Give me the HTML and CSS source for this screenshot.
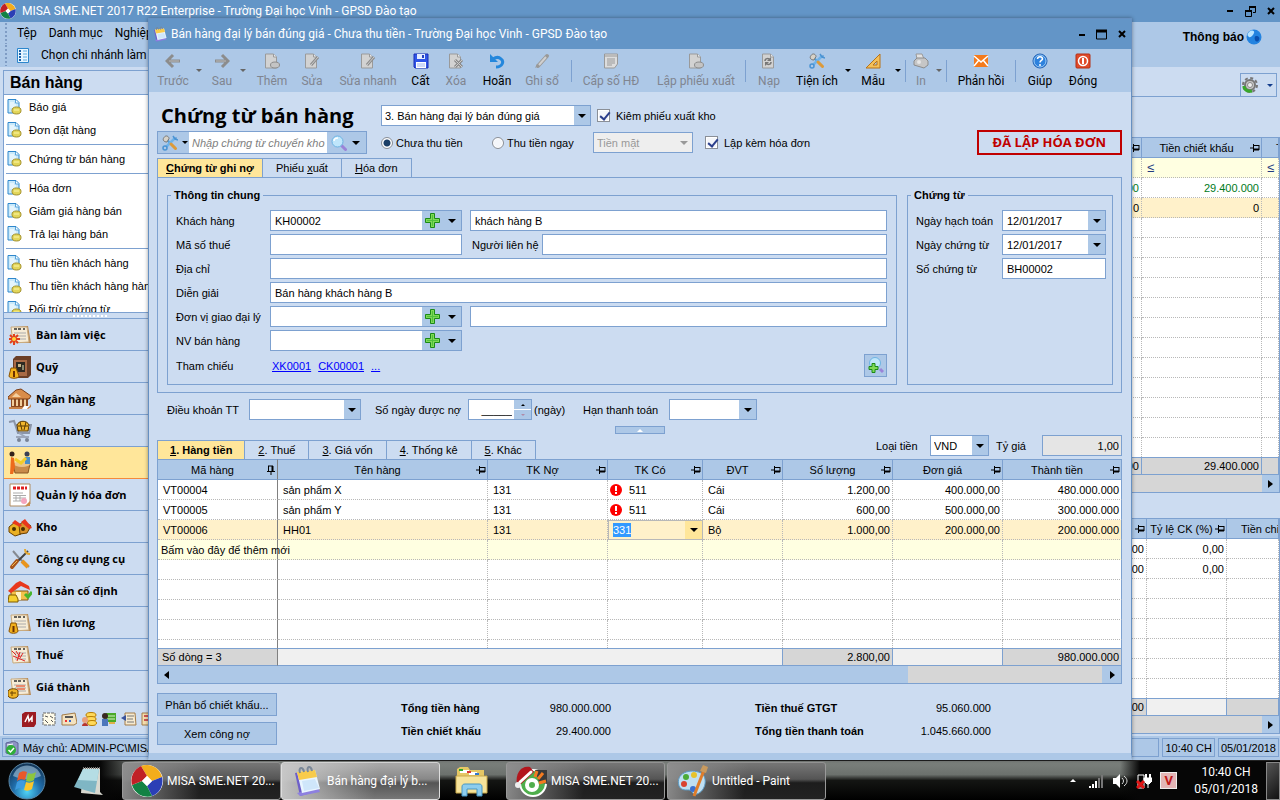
FILE: index.html
```html
<!DOCTYPE html>
<html lang="vi">
<head>
    <meta charset="UTF-8">
    <meta name="viewport" content="width=device-width, initial-scale=1.0">
    <title>MISA SME.NET 2017 - Chứng từ bán hàng</title>
    <link rel="stylesheet" href="styles.css">
</head>
<body>
    <!-- Shared icons -->
    <svg class="defs" aria-hidden="true">
        <symbol id="logo" viewBox="0 0 32 32">
            <circle cx="16" cy="16" r="16" fill="#fff"/>
            <path d="M10 1A16 16 0 0 1 31 12L21 16 16 11z" fill="#f3ad1c"/>
            <path d="M31 12A16 16 0 0 1 21 31L16 21 21 16z" fill="#2b3fb5"/>
            <path d="M21 31A16 16 0 0 1 1 20L11 16 16 21z" fill="#128244"/>
            <path d="M1 20A16 16 0 0 1 10 1L16 11 11 16z" fill="#c02026"/>
            <path d="M16 11l5 5-5 5-5-5z" fill="#fff"/>
        </symbol>
        <symbol id="doc" viewBox="0 0 15 16">
            <path d="M1 .5h8l3 3V14H1z" fill="#c9e9fa" stroke="#2f87cc"/>
            <path d="M8.500 1v3H12" fill="#fff" stroke="#5ba5dc"/>
            <path d="M3 4h4M3 6h6M3 8h5" stroke="#fff"/>
            <ellipse cx="9.500" cy="11.500" rx="4.500" ry="3.500" fill="#e2d65a" stroke="#a4902a"/>
            <path d="M7 11h5" stroke="#fdf6a8"/>
        </symbol>
        <symbol id="pad" viewBox="0 0 32 32">
            <path d="M4 8l18-3 2 22-15 4z" fill="#6d5fc9"/>
            <path d="M6 28l3 3 20-4-2-4z" fill="#8d80e0"/>
            <path d="M6 7l18-2 5 19-18 4z" fill="#e9f5ff"/>
            <path d="M6 7l18-2 2 7-18 3z" fill="#f8cb4b"/>
            <path d="M11 16l13-2 4 9-15 3z" fill="#cfe6fa"/>
            <path d="M9 8c-2-6 3-7 4-1M17 7c-2-6 3-7 4-1" fill="none" stroke="#7a8797" stroke-width="2"/>
        </symbol>
        <symbol id="pin" viewBox="0 0 10 8">
            <path d="M0 4h3M3.500 0v8M4 1.500h5M4 5.500h5M9 1v5" fill="none" stroke="#000"/>
            <path d="M4 5.500h5" stroke="#000" stroke-width="2"/>
        </symbol>
        <symbol id="plus" viewBox="0 0 15 15">
            <path d="M5.500 .5h4v5h5v4h-5v5h-4v-5h-5v-4h5z" fill="#7fd957" stroke="#1b8a17"/>
            <path d="M7.500 2v11M2 7.500h11" stroke="#4fc03c"/>
        </symbol>
        <symbol id="tools" viewBox="0 0 16 16">
            <path d="M5 5l8 8" stroke="#4d9fdd" stroke-width="2" stroke-linecap="round"/>
            <path d="M2 2.500c2-3 5-1 5 1L5 7C2 7 0 5 2 2.500z" fill="#d7d2c8" stroke="#777"/>
            <path d="M13 3L4 12" stroke="#6fb3ea" stroke-width="2.500"/>
            <path d="M14.500 2.500l-2 2M11 1l2 3 3 1" stroke="#4a93d3" fill="none" stroke-width="1.500"/>
            <circle cx="3" cy="13" r="2" fill="none" stroke="#4a93d3" stroke-width="1.500"/>
            <path d="M9 9l4.500 4.500" stroke="#dd9a3a" stroke-width="3" stroke-linecap="round"/>
        </symbol>
        <symbol id="lens" viewBox="0 0 16 16">
            <path d="M10 10l4.500 4.500" stroke="#9a84d8" stroke-width="3" stroke-linecap="round"/>
            <circle cx="6.500" cy="6.500" r="5.500" fill="#bfe6fb" stroke="#6db3e2"/>
            <path d="M3 6c0-2 2-3 4-3" stroke="#fff" fill="none" stroke-width="1.500"/>
        </symbol>
        <symbol id="gdoc" viewBox="0 0 16 16">
            <path d="M1.500 1h8l3 3v11h-11z" fill="#d2d2d2" stroke="#9a9a9a"/>
            <path d="M9.500 1v3h3" fill="#eee" stroke="#9a9a9a"/>
        </symbol>
        <symbol id="paper" viewBox="0 0 24 24">
            <path d="M5 4l15-1 3 17H7z" fill="#b98a56"/>
            <path d="M3 4h16l2 15-16 1z" fill="#f7ecd6" stroke="#c9ab7e"/>
            <path d="M6 6h3M10 6h3M15 6h2" stroke="#333" stroke-width="1.500"/>
            <path d="M6 10h12M7 13h11M7 16h11" stroke="#aaa"/>
        </symbol>
    </svg>

    <div class="desktop">
        <!-- Main application -->
        <div class="app">
            <div class="app-title">
                <svg width="16" height="16"><use href="#logo"/></svg>
                <span>MISA SME.NET 2017 R22 Enterprise - Trường Đại học Vinh - GPSD Đào tạo</span>
                <div class="win-buttons">
                    <button type="button" aria-label="Thu nhỏ"><svg width="10" height="10"><path d="M1 5h6" stroke="#000" stroke-width="2"/></svg></button>
                    <button type="button" aria-label="Khôi phục"><svg width="12" height="11"><path d="M4 1h7M1 5h6" stroke="#000" stroke-width="2"/><path d="M4.500 1v3M10.500 1v5.500H8M.5 4v6.500h6V4" fill="none" stroke="#000"/></svg></button>
                    <button type="button" aria-label="Đóng"><svg width="10" height="10"><path d="M2 2l6 6M8 2l-6 6" stroke="#000" stroke-width="2"/></svg></button>
                </div>
            </div>
            <div class="app-menu">
                <div>
                    <nav class="menu-row grip">
                        <a href="#">Tệp</a>
                        <a href="#">Danh mục</a>
                        <a href="#">Nghiệp vụ</a>
                    </nav>
                    <div class="menu-row grip">
                        <svg width="12" height="15"><path d="M.5 .5h11v14H.5z" fill="#e6f5ff" stroke="#2c86cc"/><path d="M2 3h2M2 6h2M2 9h2M2 12h2" stroke="#1b62a8" stroke-width="2"/><path d="M6 3h4M6 6h4M6 9h4M6 12h4" stroke="#5aa9e0"/></svg>
                        <a href="#">Chọn chi nhánh làm việc</a>
                    </div>
                </div>
                <a href="#" class="notice">Thông báo
                    <svg width="16" height="16"><circle cx="8" cy="8" r="7.500" fill="#2383e0"/><path d="M3 3c3-3 6-1 5 1S5 9 3 8s-2-3 0-5z" fill="#b9e4ff"/><path d="M10 7c3 0 4 2 3 4s-3 2-4 0 0-4 1-4z" fill="#0a4fae"/></svg>
                </a>
            </div>

            <div class="app-body">
                <aside class="sidebar">
                    <h2>Bán hàng</h2>
                    <ul class="tasks">
                        <li><svg width="15" height="16"><use href="#doc"/></svg><a href="#">Báo giá</a></li>
                        <li><svg width="15" height="16"><use href="#doc"/></svg><a href="#">Đơn đặt hàng</a></li>
                        <li class="sep"></li>
                        <li><svg width="15" height="16"><use href="#doc"/></svg><a href="#">Chứng từ bán hàng</a></li>
                        <li class="sep"></li>
                        <li><svg width="15" height="16"><use href="#doc"/></svg><a href="#">Hóa đơn</a></li>
                        <li><svg width="15" height="16"><use href="#doc"/></svg><a href="#">Giảm giá hàng bán</a></li>
                        <li><svg width="15" height="16"><use href="#doc"/></svg><a href="#">Trả lại hàng bán</a></li>
                        <li class="sep"></li>
                        <li><svg width="15" height="16"><use href="#doc"/></svg><a href="#">Thu tiền khách hàng</a></li>
                        <li><svg width="15" height="16"><use href="#doc"/></svg><a href="#">Thu tiền khách hàng hàng loạt</a></li>
                        <li><svg width="15" height="16"><use href="#doc"/></svg><a href="#">Đối trừ chứng từ</a></li>
                    </ul>
                    <div class="splitter"></div>
                    <nav class="modules">
                        <a href="#"><svg width="24" height="24"><use href="#paper"/><path d="M6 11v11M1 16h11M2 12l8 8M10 12l-8 8" stroke="#e2401c" stroke-width="2"/><circle cx="6" cy="16" r="2" fill="#ffd23c"/></svg>Bàn làm việc</a>
                        <a href="#"><svg width="24" height="24"><path d="M5 4l3-3h15v19l-3 3H5z" fill="#6b3f27"/><path d="M6 5h13v16H6z" fill="#a96a45"/><path d="M8 7h9v10H8z" fill="#2e2a22"/><path d="M10 9h3v3h-3z" fill="#cbb887"/><path d="M14 10h2v5h-2z" fill="#8a8a70"/><path d="M3 13h5l3 8c0 3-10 3-10 0z" fill="#f2b01c" stroke="#8a5200"/><path d="M6 16v6" stroke="#6b3000" stroke-width="2"/></svg>Quỹ</a>
                        <a href="#"><svg width="24" height="24"><path d="M3 11h17v9H3z" fill="#8c4a20"/><path d="M5 11v8M9 11v8M13 11v8M17 11v8" stroke="#f1cf9d" stroke-width="2"/><path d="M0 10l8-7 5-1 10 7-2 3H0z" fill="#d98c4a" stroke="#7b3d16"/><path d="M4 10l4-4 5 4z" fill="#f4cfa0"/><path d="M1 20h20l2-3v3l-3 2H1z" fill="#c98349"/><path d="M14 22h5l2-3h-5z" fill="#fff"/></svg>Ngân hàng</a>
                        <a href="#"><svg width="24" height="24"><path d="M1 3l5-1 4 12h11l2-8H8" fill="none" stroke="#8b95a8" stroke-width="2"/><path d="M9 6c2-5 10-5 12 0l-1 6H10z" fill="#f2b62c" stroke="#5a3a00"/><path d="M12 3l2 8M18 3l-2 8M10 7h10" stroke="#5a3a00"/><path d="M8 18h13M11 14l8 5" stroke="#9ca7bb" stroke-width="2"/><circle cx="11" cy="21" r="2" fill="#798496"/><circle cx="19" cy="21" r="2" fill="#798496"/></svg>Mua hàng</a>
                        <a href="#" class="active"><svg width="24" height="24"><path d="M5 13h17l-2 9H7z" fill="#c98b4a" stroke="#8b5722"/><ellipse cx="14" cy="13" rx="8" ry="3" fill="#ecc48a"/><path d="M3 6l3 1 1 9-2 7H2z" fill="#ed6b1c"/><circle cx="4" cy="3" r="2.500" fill="#33211a"/><circle cx="19" cy="3" r="2.500" fill="#3a3f55"/><path d="M17 6h5v7h-5z" fill="#4b8fc8"/><path d="M7 8l6 4 5-5" stroke="#f4cc29" stroke-width="3" fill="none"/></svg>Bán hàng</a>
                        <a href="#"><svg width="24" height="24"><path d="M2 1h20v20l-3 2H2z" fill="#fff" stroke="#b08b60"/><path d="M5 5h14" stroke="#e01f1f" stroke-width="3" stroke-dasharray="3 1"/><path d="M5 10h10M5 12.500h13M5 15h13M5 18h8M8 12v6M12 12v6" stroke="#aaa"/><circle cx="16" cy="18" r="3" fill="#f4a5bd"/><path d="M17 23l5-5v5z" fill="#c98b4a"/></svg>Quản lý hóa đơn</a>
                        <a href="#"><svg width="24" height="24"><path d="M1 12l6-5 6 4v8l-6 2-6-4z" fill="#eab023" stroke="#6b4200"/><path d="M11 10l5-4 7 5-4 7-7 1z" fill="#d9932a" stroke="#6b4200"/><path d="M4 8l3-3 7 5-2 2zM13 7l4-3 7 9-3 1z" fill="#e8371d"/><circle cx="6" cy="14" r="2" fill="#4b3000"/><circle cx="15" cy="14" r="2" fill="#4b3000"/></svg>Kho</a>
                        <a href="#"><svg width="24" height="24"><path d="M5 4l6 7 10 9" fill="none" stroke="#858a92" stroke-width="2"/><path d="M14 14l6 6" stroke="#e8941d" stroke-width="4"/><path d="M20 4L10 14" stroke="#444" stroke-width="2"/><path d="M9 14l-5 6" stroke="#a8541c" stroke-width="4" stroke-linecap="round"/><path d="M4 19l5-5" stroke="#f3ba4d"/><path d="M17 2c0 3 2 5 5 5" fill="none" stroke="#e4a936" stroke-width="2"/></svg>Công cụ dụng cụ</a>
                        <a href="#"><svg width="24" height="24"><path d="M3 12h17v9H3z" fill="#f2c14b" stroke="#8b5a14"/><path d="M0 12L8 4l4-2 9 5 1 4-9-4-10 7z" fill="#e8371d"/><path d="M8 13h5v8H8z" fill="#fff2c4"/><path d="M1 16h7l2 4v3H0z" fill="#f6d02f" stroke="#7e5b00"/><path d="M17 15l3 3 4-5" fill="none" stroke="#48b52c" stroke-width="3"/></svg>Tài sản cố định</a>
                        <a href="#"><svg width="24" height="24"><use href="#paper"/><path d="M3 12h5l2 8c0 3-9 3-9 0z" fill="#f2b01c" stroke="#8a5200"/><path d="M5.500 15v6" stroke="#6b3000" stroke-width="2"/></svg>Tiền lương</a>
                        <a href="#"><svg width="24" height="24"><use href="#paper"/><path d="M4 8l4 4M8 8l4 6M5 13l12 5M12 9l-3 9M15 10l-3 5" stroke="#e02525"/></svg>Thuế</a>
                        <a href="#"><svg width="24" height="24"><use href="#paper"/><path d="M8 11h9M9 14h8" stroke="#e98a6c" stroke-width="2"/><path d="M0 16c2-3 9-3 10 0v5c-2 3-8 3-10 0z" fill="#f0b423" stroke="#6b4200"/><path d="M2 18h6M4 16v5" stroke="#6b4200"/></svg>Giá thành</a>
                    </nav>
                    <div class="shortcuts">
                        <svg width="16" height="16"><path d="M1 3l3-2h11v12l-2 3H1z" fill="#9c1c22"/><path d="M4 11l3-6 1 5 3-4v5" fill="none" stroke="#fff" stroke-width="1.500"/></svg>
                        <svg width="16" height="16"><path d="M2 2h12v12H2z" fill="#fffbe8" stroke="#666" stroke-dasharray="3 1"/><path d="M4 5l3 1M9 5l3 2M4 9l3 3M10 9l2 2" stroke="#555"/></svg>
                        <svg width="16" height="16"><path d="M1 4l13-2 2 10-3 2H1z" fill="#f3e2c0" stroke="#a47d49"/><path d="M4 6h8" stroke="#555" stroke-width="2"/><path d="M4 10h2" stroke="#e33" stroke-width="2"/><path d="M8 10h2" stroke="#36c" stroke-width="2"/></svg>
                        <svg width="16" height="16"><ellipse cx="10" cy="4" rx="5" ry="2.500" fill="#ffd95a" stroke="#b87d00"/><ellipse cx="10" cy="8" rx="5" ry="2.500" fill="#ffd95a" stroke="#b87d00"/><ellipse cx="11" cy="12" rx="4.500" ry="2.500" fill="#ffd95a" stroke="#b87d00"/><circle cx="4" cy="9" r="3" fill="#e8a07c"/><path d="M1 15c0-4 6-4 6 0z" fill="#b8352d"/></svg>
                        <svg width="16" height="16"><path d="M5 2h10v9H5z" fill="#4aa927"/><path d="M6 5h8M6 8h8" stroke="#d8f0c8"/><circle cx="4" cy="5" r="3" fill="#3a2a22"/><path d="M1 8h6v7H1z" fill="#4c76bb"/><path d="M8 11h6v2H8z" fill="#e0b04a"/></svg>
                        <svg width="16" height="16"><path d="M4 2h10l1 12H4z" fill="#f6ead0" stroke="#a47d49"/><path d="M6 5h7M6 8h6M6 11h7" stroke="#777"/><path d="M0 7l5-3v6z" fill="#39539c"/></svg>
                        <svg width="16" height="16"><path d="M1 2h14v12H1z" fill="#f6dfae" stroke="#a47d49"/><path d="M3 5h8M3 9h8" stroke="#c55" stroke-width="2"/></svg>
                    </div>
                </aside>

                <main class="lists">
                    <div class="list-tools">
                        <div class="line"></div>
                        <button type="button" aria-label="Tùy chọn">
                            <svg width="16" height="16"><circle cx="8" cy="8" r="5" fill="#c9c9c9" stroke="#777" stroke-width="2"/><circle cx="8" cy="8" r="7" fill="none" stroke="#777" stroke-width="2" stroke-dasharray="3 2.500"/><circle cx="8" cy="8" r="2.500" fill="#eee" stroke="#888"/><path d="M2 9c0 4 4 6 8 5" fill="none" stroke="#39a82a" stroke-width="3"/></svg>
                            <span class="tri navy"></span>
                        </button>
                    </div>
                    <div class="back-grid">
                        <table class="grid">
                            <colgroup><col><col class="c120"><col class="c17"></colgroup>
                            <thead><tr><th><svg width="10" height="8"><use href="#pin"/></svg></th><th>Tiền chiết khấu<svg width="10" height="8"><use href="#pin"/></svg></th><th class="cut">Tỷ lệ</th></tr></thead>
                            <tbody>
                                <tr class="new"><td></td><td class="op"><span>≤</span></td><td class="op"><span>≤</span></td></tr>
                                <tr class="green"><td class="num">29.400.000</td><td class="num">29.400.000</td><td></td></tr>
                                <tr class="current"><td class="num">0</td><td class="num">0</td><td></td></tr>
                                <tr><td></td><td></td><td></td></tr>
                                <tr><td></td><td></td><td></td></tr>
                                <tr><td></td><td></td><td></td></tr>
                                <tr><td></td><td></td><td></td></tr>
                                <tr><td></td><td></td><td></td></tr>
                                <tr><td></td><td></td><td></td></tr>
                                <tr><td></td><td></td><td></td></tr>
                                <tr><td></td><td></td><td></td></tr>
                                <tr><td></td><td></td><td></td></tr>
                                <tr><td></td><td></td><td></td></tr>
                                <tr><td></td><td></td><td></td></tr>
                                <tr class="last"><td></td><td></td><td></td></tr>
                            </tbody>
                            <tfoot><tr><td class="num sum">29.400.000</td><td class="num sum">29.400.000</td><td class="sum"></td></tr></tfoot>
                        </table>
                        <div class="hscroll gray"><span class="tri right"></span></div>
                    </div>
                    <div class="back-grid">
                        <table class="grid">
                            <colgroup><col><col class="c80"><col class="c52"></colgroup>
                            <thead><tr><th><svg width="10" height="8"><use href="#pin"/></svg></th><th>Tỷ lệ CK (%)<svg width="10" height="8"><use href="#pin"/></svg></th><th class="cut">Tiền chiết khấu</th></tr></thead>
                            <tbody>
                                <tr><td class="num">0,00</td><td class="num">0,00</td><td></td></tr>
                                <tr><td class="num">0,00</td><td class="num">0,00</td><td></td></tr>
                                <tr><td></td><td></td><td></td></tr>
                                <tr><td></td><td></td><td></td></tr>
                                <tr><td></td><td></td><td></td></tr>
                                <tr><td></td><td></td><td></td></tr>
                                <tr><td></td><td></td><td></td></tr>
                                <tr class="last"><td></td><td></td><td></td></tr>
                            </tbody>
                            <tfoot><tr><td class="num sum">0,00</td><td></td><td class="sum"></td></tr></tfoot>
                        </table>
                        <div class="hscroll gray"><span class="tri right"></span></div>
                    </div>
                </main>
            </div>

            <div class="statusbar">
                <div class="wide">
                    <svg width="14" height="16"><path d="M1 3l8-2 4 2v11l-4 1-8-2z" fill="#8d93c4" stroke="#5d6396"/><path d="M2 5l6-1M2 7l6-1" stroke="#fff"/><circle cx="6" cy="10" r="5" fill="#2fae3a"/><path d="M3.500 10l2 2 3.500-4" fill="none" stroke="#fff" stroke-width="1.500"/></svg>
                    Máy chủ: ADMIN-PC\MISASME2017
                </div>
                <div>10:40 CH</div>
                <div>05/01/2018</div>
            </div>
        </div>

        <!-- Voucher window -->
        <form class="window">
            <div class="win-title">
                <svg width="16" height="16"><use href="#pad"/></svg>
                <span>Bán hàng đại lý bán đúng giá - Chưa thu tiền - Trường Đại học Vinh - GPSD Đào tạo</span>
                <div class="win-buttons">
                    <button type="button" aria-label="Thu nhỏ"><svg width="10" height="10"><path d="M2 6h6" stroke="#000" stroke-width="2"/></svg></button>
                    <button type="button" aria-label="Phóng to"><svg width="12" height="11"><path d="M.5 1v9h10V1" fill="none" stroke="#000"/><path d="M0 2h11" stroke="#000" stroke-width="3"/></svg></button>
                    <button type="button" aria-label="Đóng"><svg width="10" height="10"><path d="M2 2l6 6M8 2l-6 6" stroke="#000" stroke-width="2"/></svg></button>
                </div>
            </div>

            <div class="toolbar">
                <button type="button" disabled><svg width="16" height="16"><path d="M8 2L2 8l6 6M3 8h12" fill="none" stroke="#8c8c8c" stroke-width="3"/><path d="M4 8h10" stroke="#bbb"/></svg>Trước</button>
                <span class="tri dim"></span>
                <button type="button" disabled><svg width="16" height="16"><path d="M8 2l6 6-6 6M1 8h12" fill="none" stroke="#8c8c8c" stroke-width="3"/><path d="M2 8h10" stroke="#bbb"/></svg>Sau</button>
                <span class="tri dim"></span>
                <button type="button" disabled><svg width="16" height="16"><use href="#gdoc"/><ellipse cx="11" cy="12" rx="4.500" ry="3" fill="#c4c4c4" stroke="#8c8c8c"/></svg>Thêm</button>
                <button type="button" disabled><svg width="16" height="16"><use href="#gdoc"/><path d="M14 4l-7 8" stroke="#8c8c8c" stroke-width="3"/><path d="M14 4l-7 8" stroke="#ccc"/></svg>Sửa</button>
                <button type="button" disabled><svg width="16" height="16"><use href="#gdoc"/><path d="M14 4l-7 8" stroke="#8c8c8c" stroke-width="3"/><path d="M14 4l-7 8" stroke="#ccc"/></svg>Sửa nhanh</button>
                <button type="button"><svg width="16" height="16"><path d="M1 1h14v14H2l-1-1z" fill="#2f55e8" stroke="#1a2fb4"/><path d="M4 1h8v5H4z" fill="#e4ecff"/><path d="M9 2h2v3H9z" fill="#2340c0"/><path d="M3 9h10v6H3z" fill="#fff"/><path d="M4 11h8M4 13h8" stroke="#9db4f2"/></svg>Cất</button>
                <button type="button" disabled><svg width="16" height="16"><use href="#gdoc"/><path d="M7 7l7 7M14 7l-7 7" stroke="#8a8a8a" stroke-width="3"/><path d="M7 7l7 7M14 7l-7 7" stroke="#ccc"/></svg>Xóa</button>
                <button type="button"><svg width="16" height="16"><path d="M7 14c7 0 8-6 5-8-2-2-5-2-8 0" fill="none" stroke="#2487dc" stroke-width="3"/><path d="M1 1v8h8z" fill="#2487dc"/></svg>Hoãn</button>
                <button type="button" disabled><svg width="16" height="16"><path d="M13 3L4 13" stroke="#999" stroke-width="4" stroke-linecap="round"/><path d="M12 4L5 12" stroke="#d0d0d0" stroke-width="2"/><path d="M1 15l2-4 2 2z" fill="#999"/></svg>Ghi sổ</button>
                <span class="bar"></span>
                <button type="button" disabled><svg width="16" height="16"><path d="M1.500 1h13v10l-3 4h-10z" fill="#ddd" stroke="#999"/><path d="M2 3h12M4 6h8M4 8h8M4 10h8M4 12h5" stroke="#999"/></svg>Cấp số HĐ</button>
                <button type="button" disabled><svg width="16" height="16"><use href="#gdoc"/><ellipse cx="11" cy="12" rx="4.500" ry="3" fill="#c4c4c4" stroke="#8c8c8c"/></svg>Lập phiếu xuất</button>
                <span class="bar"></span>
                <button type="button" disabled><svg width="16" height="16"><use href="#gdoc"/><path d="M4 8c0-3 4-3 5-1M10 9c0 3-4 3-5 1" fill="none" stroke="#777" stroke-width="1.500"/><path d="M10 4v4H6zM4 13V9h4z" fill="#777"/></svg>Nạp</button>
                <button type="button"><svg width="16" height="16"><use href="#tools"/></svg>Tiện ích</button>
                <span class="tri"></span>
                <button type="button"><svg width="16" height="16"><path d="M15 1v14H1z" fill="#f4c05a" stroke="#b87318"/><path d="M12 8v4H8z" fill="#adc8e7" stroke="#b87318"/></svg>Mẫu</button>
                <span class="tri"></span>
                <span class="bar"></span>
                <button type="button" disabled><svg width="16" height="16"><path d="M3 1h6l2 5H4z" fill="#e2e2e2" stroke="#999"/><path d="M1 8l3-3h8l3 3v4l-4 3-10-3z" fill="#c6c6c6" stroke="#8c8c8c"/><circle cx="6" cy="9" r="2" fill="#e6e6e6"/></svg>In</button>
                <span class="tri dim"></span>
                <span class="bar"></span>
                <button type="button"><svg width="16" height="16"><path d="M1 2h14v12H1z" fill="#f47a1c"/><path d="M1 3l7 6 7-6M1 13l5-6M15 13l-5-6" fill="none" stroke="#fff" stroke-width="1.500"/></svg>Phản hồi</button>
                <span class="bar"></span>
                <button type="button"><svg width="16" height="16"><circle cx="8" cy="8" r="7" fill="#2e82dd" stroke="#1c5db0"/><circle cx="8" cy="8" r="6" fill="none" stroke="#9dcaf5"/><path d="M5.500 6c0-3 5-3 5 0 0 1.500-2.500 1.500-2.500 3.500M8 11v2" fill="none" stroke="#fff" stroke-width="1.500"/></svg>Giúp</button>
                <button type="button"><svg width="16" height="16"><rect x="1" y="1" width="14" height="14" rx="1" fill="#e04a2a" stroke="#b42e14"/><circle cx="8" cy="8" r="4.500" fill="none" stroke="#fff" stroke-width="1.500"/><path d="M8 5v6" stroke="#fff" stroke-width="2"/></svg>Đóng</button>
            </div>

            <div class="content">
                <div class="head-row first">
                    <h1>Chứng từ bán hàng</h1>
                    <div class="select kind">
                        <select aria-label="Loại chứng từ"><option>3. Bán hàng đại lý bán đúng giá</option></select>
                    </div>
                    <label class="check"><input type="checkbox" checked>Kiêm phiếu xuất kho</label>
                </div>
                <div class="head-row second">
                    <div class="finder">
                        <button type="button" aria-label="Loại tìm kiếm"><svg width="16" height="16"><use href="#tools"/></svg><span class="tri"></span></button>
                        <input type="text" aria-label="Tìm chứng từ" placeholder="Nhập chứng từ chuyển kho">
                        <button type="button" aria-label="Tìm" class="go"><svg width="16" height="16"><use href="#lens"/></svg><span class="tri big"></span></button>
                    </div>
                    <label class="check paid"><input type="radio" name="pay" checked>Chưa thu tiền</label>
                    <label class="check now"><input type="radio" name="pay">Thu tiền ngay</label>
                    <div class="select method">
                        <select aria-label="Hình thức" disabled><option>Tiền mặt</option></select>
                    </div>
                    <label class="check"><input type="checkbox" checked>Lập kèm hóa đơn</label>
                    <strong class="stamp">ĐÃ LẬP HÓA ĐƠN</strong>
                </div>

                <div class="tabs upper">
                    <button type="button" class="on"><u>C</u>hứng từ ghi nợ</button>
                    <button type="button">Phiếu <u>x</u>uất</button>
                    <button type="button"><u>H</u>óa đơn</button>
                </div>
                <div class="panel">
                    <fieldset class="general">
                        <legend>Thông tin chung</legend>
                        <div class="row">
                            <label for="customer">Khách hàng</label>
                            <div class="combo"><input type="text" id="customer" value="KH00002"><button type="button" aria-label="Thêm khách hàng"><svg width="15" height="15"><use href="#plus"/></svg></button><button type="button" class="drop" aria-label="Chọn"><span class="tri big"></span></button></div>
                            <input type="text" class="grow" aria-label="Tên khách hàng" value="khách hàng B">
                        </div>
                        <div class="row">
                            <label for="tax">Mã số thuế</label>
                            <input type="text" id="tax" class="code">
                            <label for="contact" class="mid">Người liên hệ</label>
                            <input type="text" id="contact" class="grow">
                        </div>
                        <div class="row">
                            <label for="address">Địa chỉ</label>
                            <input type="text" id="address" class="grow">
                        </div>
                        <div class="row">
                            <label for="note">Diễn giải</label>
                            <input type="text" id="note" class="grow" value="Bán hàng khách hàng B">
                        </div>
                        <div class="row">
                            <label for="agent">Đơn vị giao đại lý</label>
                            <div class="combo"><input type="text" id="agent"><button type="button" aria-label="Thêm đơn vị"><svg width="15" height="15"><use href="#plus"/></svg></button><button type="button" class="drop" aria-label="Chọn"><span class="tri big"></span></button></div>
                            <input type="text" class="grow" aria-label="Tên đơn vị">
                        </div>
                        <div class="row">
                            <label for="seller">NV bán hàng</label>
                            <div class="combo"><input type="text" id="seller"><button type="button" aria-label="Thêm nhân viên"><svg width="15" height="15"><use href="#plus"/></svg></button><button type="button" class="drop" aria-label="Chọn"><span class="tri big"></span></button></div>
                        </div>
                        <div class="row refs">
                            <span class="caption">Tham chiếu</span>
                            <a href="#">XK0001</a>
                            <a href="#">CK00001</a>
                            <a href="#">...</a>
                            <button type="button" class="lookup" aria-label="Tìm tham chiếu"><svg width="16" height="18"><circle cx="7" cy="6" r="5.500" fill="#bfe6fb" stroke="#6db3e2"/><path d="M12 12l3 3" stroke="#9a84d8" stroke-width="3"/><path d="M4 6.500h3v3h3v3H7v3H4v-3H1v-3h3z" fill="#7fd957" stroke="#1b8a17"/></svg></button>
                        </div>
                    </fieldset>
                    <fieldset class="voucher">
                        <legend>Chứng từ</legend>
                        <div class="row">
                            <label for="posted">Ngày hạch toán</label>
                            <div class="combo"><input type="text" id="posted" value="12/01/2017"><button type="button" class="drop" aria-label="Lịch"><span class="tri big"></span></button></div>
                        </div>
                        <div class="row">
                            <label for="issued">Ngày chứng từ</label>
                            <div class="combo"><input type="text" id="issued" value="12/01/2017"><button type="button" class="drop" aria-label="Lịch"><span class="tri big"></span></button></div>
                        </div>
                        <div class="row">
                            <label for="number">Số chứng từ</label>
                            <input type="text" id="number" class="grow" value="BH00002">
                        </div>
                    </fieldset>
                </div>

                <div class="terms">
                    <label for="terms">Điều khoản TT</label>
                    <div class="select term"><select id="terms"><option></option></select></div>
                    <label for="days" class="gap">Số ngày được nợ</label>
                    <div class="combo spin"><input type="text" id="days" value="_____"><div class="arrows"><button type="button" aria-label="Tăng"><span class="tri up"></span></button><button type="button" aria-label="Giảm"><span class="tri pink"></span></button></div></div>
                    <span class="unit">(ngày)</span>
                    <label for="due" class="due">Hạn thanh toán</label>
                    <div class="combo due-date"><input type="text" id="due"><button type="button" class="drop" aria-label="Lịch"><span class="tri big"></span></button></div>
                </div>
                <button type="button" class="collapse" aria-label="Thu gọn"><span class="tri up white"></span></button>

                <div class="detail-head">
                    <div class="tabs">
                        <button type="button" class="on"><u>1</u>. Hàng tiền</button>
                        <button type="button"><u>2</u>. Thuế</button>
                        <button type="button"><u>3</u>. Giá vốn</button>
                        <button type="button"><u>4</u>. Thống kê</button>
                        <button type="button"><u>5</u>. Khác</button>
                    </div>
                    <div class="currency">
                        <label for="currency">Loại tiền</label>
                        <div class="select money"><select id="currency"><option>VND</option></select></div>
                        <label for="rate">Tỷ giá</label>
                        <input type="text" id="rate" value="1,00" readonly>
                    </div>
                </div>

                <table class="grid items">
                    <colgroup><col class="c120"><col class="c210"><col class="c120"><col class="c95"><col class="c80"><col class="c110"><col class="c110"><col></colgroup>
                    <thead>
                        <tr>
                            <th>Mã hàng<svg class="upright" width="10" height="8"><use href="#pin"/></svg></th>
                            <th>Tên hàng<svg width="10" height="8"><use href="#pin"/></svg></th>
                            <th>TK Nợ<svg width="10" height="8"><use href="#pin"/></svg></th>
                            <th>TK Có<svg width="10" height="8"><use href="#pin"/></svg></th>
                            <th>ĐVT<svg width="10" height="8"><use href="#pin"/></svg></th>
                            <th>Số lượng<svg width="10" height="8"><use href="#pin"/></svg></th>
                            <th>Đơn giá<svg width="10" height="8"><use href="#pin"/></svg></th>
                            <th>Thành tiền<svg width="10" height="8"><use href="#pin"/></svg></th>
                        </tr>
                    </thead>
                    <tbody>
                        <tr><td>VT00004</td><td>sản phẩm X</td><td>131</td><td class="warn"><svg width="12" height="12"><circle cx="6" cy="6" r="6" fill="#f00"/><path d="M6 2v5M6 8v2" stroke="#fff" stroke-width="2"/></svg>511</td><td>Cái</td><td class="num">1.200,00</td><td class="num">400.000,00</td><td class="num">480.000.000</td></tr>
                        <tr><td>VT00005</td><td>sản phẩm Y</td><td>131</td><td class="warn"><svg width="12" height="12"><circle cx="6" cy="6" r="6" fill="#f00"/><path d="M6 2v5M6 8v2" stroke="#fff" stroke-width="2"/></svg>511</td><td>Cái</td><td class="num">600,00</td><td class="num">500.000,00</td><td class="num">300.000.000</td></tr>
                        <tr class="current"><td>VT00006</td><td>HH01</td><td>131</td><td class="edit"><div><mark>331</mark><button type="button" aria-label="Chọn tài khoản"><span class="tri big"></span></button></div></td><td>Bộ</td><td class="num">1.000,00</td><td class="num">200.000,00</td><td class="num">200.000.000</td></tr>
                        <tr class="new"><td class="hint">Bấm vào đây để thêm mới</td><td></td><td></td><td></td><td></td><td></td><td></td><td></td></tr>
                        <tr><td></td><td></td><td></td><td></td><td></td><td></td><td></td><td></td></tr>
                        <tr><td></td><td></td><td></td><td></td><td></td><td></td><td></td><td></td></tr>
                        <tr><td></td><td></td><td></td><td></td><td></td><td></td><td></td><td></td></tr>
                        <tr><td></td><td></td><td></td><td></td><td></td><td></td><td></td><td></td></tr>
                        <tr class="half"><td></td><td></td><td></td><td></td><td></td><td></td><td></td><td></td></tr>
                    </tbody>
                    <tfoot>
                        <tr><td class="sum count">Số dòng = 3</td><td colspan="4"></td><td class="num sum">2.800,00</td><td></td><td class="num sum">980.000.000</td></tr>
                    </tfoot>
                </table>
                <div class="hscroll">
                    <span class="tri left"></span>
                    <div class="track"></div>
                    <span class="tri right"></span>
                </div>

                <div class="bottom">
                    <div class="actions">
                        <button type="button">Phân bổ chiết khấu...</button>
                        <button type="button">Xem công nợ</button>
                    </div>
                    <dl>
                        <dt>Tổng tiền hàng</dt><dd>980.000.000</dd>
                        <dt>Tiền chiết khấu</dt><dd>29.400.000</dd>
                    </dl>
                    <dl class="wide">
                        <dt>Tiền thuế GTGT</dt><dd>95.060.000</dd>
                        <dt>Tổng tiền thanh toán</dt><dd>1.045.660.000</dd>
                    </dl>
                </div>
            </div>
        </form>
    </div>

    <!-- Windows taskbar -->
    <footer class="taskbar">
        <button type="button" class="start" aria-label="Start">
            <svg width="38" height="38" viewBox="0 0 38 38"><defs><radialGradient id="orb" cx=".5" cy=".8" r=".8"><stop offset="0" stop-color="#4fd3f7"/><stop offset=".5" stop-color="#1f6ba8"/><stop offset="1" stop-color="#12314f"/></radialGradient></defs><circle cx="19" cy="19" r="18" fill="url(#orb)" stroke="#5b88a8"/><path d="M5 14c4-14 24-14 28 0-8 4-20 4-28 0z" fill="#a9c8de" opacity=".6"/><path d="M11 11c3-2 5-2 8-1l-2 8c-3-1-5-1-8 1z" fill="#e8582a"/><path d="M20 11c3 1 5 1 8-1l-2 8c-3 2-5 2-8 1z" fill="#8cc63e"/><path d="M9 20c3-2 5-2 8-1l-2 8c-3-1-5-1-8 1z" fill="#3d9be0"/><path d="M18 20c3 1 5 1 8-1l-2 8c-3 2-5 2-8 1z" fill="#fbc62a"/></svg>
        </button>
        <button type="button" class="quick" aria-label="Notepad">
            <svg width="30" height="30"><path d="M10 2h17v24l3 3-22-2z" fill="#d8d8cf"/><path d="M10 3h16l-4 24-21-6z" fill="#7fb6c4"/><path d="M10 3h16l-2 12L5 14z" fill="#b5dde4"/><path d="M10 2h17" stroke="#777" stroke-width="2" stroke-dasharray="1 1"/></svg>
        </button>
        <button type="button" class="task"><svg width="32" height="32"><use href="#logo"/></svg>MISA SME.NET 20...</button>
        <button type="button" class="task focus"><svg width="32" height="32"><use href="#pad"/></svg>Bán hàng đại lý b...</button>
        <button type="button" class="folder" aria-label="Explorer">
            <svg width="34" height="32"><path d="M2 4l3-2h8l2 3h14v22H2z" fill="#e5c765"/><path d="M5 5h9v3H5zM14 7h8v3h-8z" fill="#fff"/><path d="M4 4h4v2H4z" fill="#2aa52a"/><path d="M12 6h4v2h-4z" fill="#d33"/><path d="M20 8h4v2h-4z" fill="#37c"/><path d="M1 11h31v17H1z" fill="#f6e39a" stroke="#c9a94a"/><path d="M7 31v-9c0-2 1-3 3-3h14c2 0 3 1 3 3v9h-5v-7H12v7z" fill="#8dcdee" stroke="#4796c4"/></svg>
        </button>
        <button type="button" class="task"><svg width="32" height="32"><circle cx="18" cy="18" r="13" fill="#4fae4c" stroke="#fff" stroke-width="2"/><path d="M20 5l12 0v14l-8-2z" fill="#3a3a3a"/><circle cx="17" cy="20" r="5" fill="none" stroke="#fff" stroke-width="4"/><path d="M20 12l2-6M23 14l5-6M24 18l7-2" stroke="#f47b20" stroke-width="3"/><path d="M2 19C0 9 6 0 15 2l4 5L5 20z" fill="#b3161d"/><path d="M5 17L16 7" stroke="#fff" stroke-width="3" stroke-linecap="round"/><circle cx="3" cy="20" r="3" fill="#eee"/></svg>MISA SME.NET 20...</button>
        <button type="button" class="task paint"><svg width="32" height="32"><path d="M3 21C-1 8 14 3 25 8c7 4 5 18-4 21-5 2-4-4-8-4-5 0-8 0-10-4z" fill="#bfdff2" stroke="#5b9ac4"/><circle cx="8" cy="19" r="3" fill="#d9412f"/><circle cx="10" cy="12" r="3" fill="#4cab38"/><circle cx="18" cy="10" r="3" fill="#e7c32b"/><circle cx="17" cy="24" r="3" fill="#3a6fce"/><path d="M28 5L18 31" stroke="#e07d2a" stroke-width="3"/><path d="M24 6l3-6 5 2-2 6z" fill="#c99a5e"/></svg>Untitled - Paint</button>
        <div class="tray">
            <span class="tri up white"></span>
            <svg width="16" height="14"><path d="M2 14v-2M5 14v-4M8 14V7" stroke="#fff" stroke-width="2"/><path d="M11 14V4M14 14V1" stroke="#777" stroke-width="2"/></svg>
            <svg width="16" height="16"><path d="M1 5h3l4-4v14l-4-4H1z" fill="#fff"/><path d="M10 5c2 2 2 4 0 6M12 3c4 3 4 7 0 10" fill="none" stroke="#ddd"/></svg>
            <svg width="16" height="16"><path d="M2 2h6v13H2z" fill="none" stroke="#fff"/><path d="M10 1v4M14 1v4" stroke="#fff" stroke-width="2"/><path d="M8 5h8v3l-3 3h-2L8 8zM12 11v4" fill="#fff" stroke="#fff"/><path d="M1 8l7 7M8 8l-7 7" stroke="#e01515" stroke-width="3"/></svg>
            <span class="unikey">V</span>
            <time>10:40 CH<br>05/01/2018</time>
            <button type="button" class="peek" aria-label="Show desktop"></button>
        </div>
    </footer>
</body>
</html>
```

FILE: styles.css
```css
* {
    box-sizing: border-box;
}
body {
    margin: 0;
    height: 100vh;
    display: flex;
    flex-direction: column;
    overflow: hidden;
    font-family: "Liberation Sans", Arial, sans-serif;
    font-size: 11px;
    line-height: 14px;
    color: #000;
    background: #000;
}
a {
    color: inherit;
    text-decoration: none;
}
h1, h2, ul, dl, dd {
    margin: 0;
    padding: 0;
}
button, input, select {
    font: inherit;
    color: inherit;
    margin: 0;
    padding: 0;
    border: 0;
    background: none;
}
label {
    flex: none;
    white-space: nowrap;
}
svg {
    display: block;
    flex: none;
}
.defs {
    position: absolute;
    width: 0;
    height: 0;
}
.desktop {
    flex: 1;
    min-height: 0;
    position: relative;
}

/* small triangles */
.tri {
    flex: none;
    display: block;
    width: 0;
    height: 0;
    border: 3px solid transparent;
    border-top-color: #000;
    border-bottom: 0;
}
.tri.big {
    border-width: 4px 4px 0;
}
.tri.dim {
    border-top-color: #666;
}
.tri.navy {
    border-top-color: #123c8c;
}
.tri.pink {
    border-width: 2px 2px 0;
    border-top-color: #b08aa8;
}
.tri.up {
    border: 3px solid transparent;
    border-top: 0;
    border-bottom-color: #000;
}
.tri.up.white {
    border-bottom-color: #fff;
}
.tri.left, .tri.right {
    border: 4px solid transparent;
    border-left: 5px solid #000;
    border-right: 0;
}
.tri.left {
    border-left: 0;
    border-right: 5px solid #000;
}

/* main application */
.app {
    height: 100%;
    display: flex;
    flex-direction: column;
    background: #ccdcf1;
}
.app-title, .win-title {
    display: flex;
    align-items: center;
    gap: 6px;
    height: 22px;
    background: #6395c7;
    color: #fff;
    font-family: Roboto, "Open Sans", sans-serif;
    font-size: 12px;
    white-space: nowrap;
}
.win-buttons {
    margin-left: auto;
    display: flex;
    gap: 9px;
    padding-right: 4px;
}
.app-menu {
    display: flex;
    justify-content: space-between;
    align-items: flex-start;
    height: 45px;
    background: #adc8e7;
    font-family: Roboto, "Open Sans", sans-serif;
    font-size: 12px;
}
.menu-row {
    display: flex;
    align-items: center;
    gap: 12px;
    height: 22px;
    margin-left: 4px;
    padding-left: 13px;
}
.grip {
    background: radial-gradient(circle, #7f9cc4 1px, transparent 1px) 0 0 / 4px 4px repeat-y;
}
.notice {
    display: flex;
    align-items: center;
    gap: 2px;
    margin: 7px 18px 0 0;
    font-family: "Liberation Sans", sans-serif;
    font-size: 12px;
    font-weight: bold;
}
.app-body {
    flex: 1;
    min-height: 0;
    display: flex;
}
.sidebar {
    width: 170px;
    margin: 3px 0 1px 3px;
    display: flex;
    flex-direction: column;
    border: 1px solid #7da1d0;
}
.sidebar h2 {
    height: 24px;
    padding-left: 6px;
    font-size: 16px;
    line-height: 24px;
    border-bottom: 1px solid #7da1d0;
}
.tasks {
    flex: 1;
    min-height: 0;
    overflow: hidden;
    background: #fff;
    list-style: none;
}
.tasks li {
    display: flex;
    align-items: center;
    gap: 7px;
    height: 23px;
    padding-left: 3px;
    white-space: nowrap;
}
.tasks .sep {
    height: 6px;
    margin-left: 2px;
    background: linear-gradient(#7da1d0, #7da1d0) 0 3px / 100% 1px no-repeat;
}
.splitter {
    height: 6px;
    border-top: 1px solid #7da1d0;
    background: repeating-linear-gradient(90deg, #fff 0 2px, transparent 2px 4px) 69px 2px / 36px 2px no-repeat;
}
.modules a {
    display: flex;
    align-items: center;
    gap: 4px;
    height: 32px;
    padding-left: 4px;
    border-top: 1px solid #7da1d0;
    font-family: "Open Sans", sans-serif;
    font-size: 11px;
    font-weight: bold;
}
.modules .active {
    background: #ffe69a;
}
.modules .active + a {
    border-top-color: #f58a3c;
}
.shortcuts {
    display: flex;
    align-items: center;
    gap: 4px;
    height: 32px;
    padding-left: 17px;
    border-top: 1px solid #7da1d0;
    overflow: hidden;
}
.lists {
    flex: 1;
}
.list-tools {
    display: flex;
    height: 30px;
    margin-bottom: 40px;
    padding: 6px 3px 0 0;
}
.list-tools .line {
    flex: 1;
    border-bottom: 1px solid #7da1d0;
}
.list-tools button {
    display: flex;
    align-items: center;
    gap: 9px;
    width: 37px;
    padding-left: 1px;
    border: 1px solid #7da1d0;
}
.back-grid {
    margin-bottom: 25px;
    background: #fff;
    border-right: 1px solid #7da1d0;
}
.statusbar {
    display: flex;
    gap: 3px;
    height: 24px;
    padding: 2px 1px 3px 2px;
    background: #adc8e7;
}
.statusbar div {
    display: flex;
    align-items: center;
    gap: 4px;
    padding: 0 2px;
    border: 1px solid #7da1d0;
}
.statusbar .wide {
    flex: 1;
}

/* grids */
.grid {
    width: 100%;
    table-layout: fixed;
    border-collapse: separate;
    border-spacing: 0;
    background: #fff;
}
.grid th {
    position: relative;
    height: 21px;
    padding: 0 10px 0 0;
    font-weight: normal;
    white-space: nowrap;
    overflow: hidden;
    background: #adc8e7;
    border: solid #7da1d0;
    border-width: 1px 1px 1px 0;
}
.grid th svg {
    position: absolute;
    right: 1px;
    top: 6px;
}
.grid th .upright {
    transform: rotate(-90deg);
}
.grid th.cut {
    padding: 0 0 0 14px;
    text-align: left;
}
.grid td {
    height: 20px;
    padding: 0 2px 0 5px;
    white-space: nowrap;
    border: dotted #b8b8b8;
    border-width: 0 1px 1px 0;
}
.grid .num {
    text-align: right;
}
.grid .new td {
    background: #ffffe1;
}
.grid .current td {
    background: #fff1ca;
}
.grid .green td {
    color: #007a1c;
}
.grid .last td {
    height: 19px;
    border-bottom: 0;
}
.grid .op span {
    display: inline-block;
    width: 14px;
    font-size: 13px;
    color: #223a80;
}
.grid tfoot td {
    height: 18px;
    background: #f0f0f0;
    border: 1px solid #7da1d0;
    border-left: 0;
}
.grid tfoot .sum {
    background: #d6d6d6;
}
.c17 { width: 17px; }
.c52 { width: 52px; }
.c80 { width: 80px; }
.c95 { width: 95px; }
.c110 { width: 110px; }
.c120 { width: 120px; }
.c210 { width: 210px; }
.hscroll {
    display: flex;
    align-items: center;
    justify-content: space-between;
    height: 18px;
    padding: 0 6px;
    background: #adc8e7;
    border: 1px solid #7da1d0;
    border-top: 0;
}
.hscroll .track {
    flex: none;
    width: 194px;
    height: 17px;
    margin: 0 8px 0 auto;
    background: #d6d6d6;
}
.hscroll.gray {
    justify-content: flex-end;
    border-right: 0;
    background: linear-gradient(#adc8e7, #adc8e7) right / 17px 100% no-repeat #d6d6d6;
}

/* voucher window */
.window {
    position: absolute;
    left: 148px;
    right: 148px;
    top: 18px;
    bottom: 0;
    display: flex;
    flex-direction: column;
    background: #ccdcf1;
    border: 1px solid #6690c2;
    border-bottom: 7px solid #adc8e7;
    box-shadow: 0 0 4px rgba(0, 0, 0, 0.4);
}
.win-title {
    height: 30px;
    padding-left: 3px;
    gap: 3px;
}
.toolbar {
    display: grid;
    grid-template-columns: 40px 12px 34px 8px 50px 30px 82px 23px 48px 34px 56px 2px 78px 92px 6px 42px 54px 8px 42px 8px 6px 26px 9px 6px 64px 5px 44px 42px;
    justify-items: center;
    align-items: center;
    height: 43px;
    padding: 0 4px;
    background: #adc8e7;
    font-family: Roboto, "Open Sans", sans-serif;
}
.toolbar button {
    display: flex;
    flex-direction: column;
    align-items: center;
    gap: 4px;
    width: 100%;
    font-size: 12px;
    line-height: 16px;
    white-space: nowrap;
}
.toolbar button:disabled {
    color: #808590;
}
.toolbar .bar {
    width: 1px;
    height: 22px;
    background: #7da1d0;
}
.content {
    flex: 1;
    min-height: 0;
    padding: 13px 9px 0 8px;
}
.head-row {
    display: flex;
    align-items: center;
}
h1 {
    width: 224px;
    padding-left: 4px;
    font-family: "Open Sans", sans-serif;
    font-size: 20px;
    line-height: 20px;
    white-space: nowrap;
}
.second {
    height: 23px;
    margin: 5px 0 4px;
}

/* fields */
.row > input, .select, .combo, .currency input {
    height: 21px;
    background: #fff;
    border: 1px solid #7da1d0;
}
.row > input {
    padding: 0 4px;
}
.select {
    position: relative;
}
.select select {
    width: 100%;
    height: 100%;
    padding-left: 3px;
    appearance: none;
}
.select::before {
    content: "";
    position: absolute;
    right: 0;
    top: 0;
    width: 16px;
    height: 100%;
    background: #adc8e7;
}
.select::after {
    content: "";
    position: absolute;
    right: 4px;
    top: 8px;
    border: 4px solid transparent;
    border-top-color: #000;
    border-bottom: 0;
}
.combo {
    display: flex;
    min-width: 0;
}
.combo input {
    flex: 1;
    min-width: 0;
    padding-left: 4px;
}
.combo button {
    display: flex;
    align-items: center;
    justify-content: center;
    width: 20px;
    background: #adc8e7;
}
.combo .drop {
    width: 17px;
}
.general .combo .drop {
    width: 19px;
}
.kind {
    width: 210px;
    margin-right: 6px;
}
.method {
    width: 100px;
    margin-right: 12px;
}
.method::before {
    display: none;
}
.method::after {
    border-top-color: #999;
}
.method select {
    background: #eee;
    color: #999;
    opacity: 1;
}
.check {
    display: flex;
    align-items: center;
    gap: 6px;
}
.check input {
    appearance: none;
    width: 13px;
    height: 13px;
    background: #f4f6fa;
    border: 1px solid #8a8f97;
    box-shadow: inset 0 0 0 1px #fff;
}
.check input[type="checkbox"]:checked::after {
    content: "";
    display: block;
    width: 4px;
    height: 8px;
    margin: 0 0 0 4px;
    border: solid #2b3f8c;
    border-width: 0 2px 2px 0;
    transform: rotate(40deg);
}
.check input[type="radio"] {
    width: 12px;
    height: 12px;
    border-radius: 50%;
}
.check input[type="radio"]:checked {
    background: radial-gradient(circle, #1b3f67 3px, #f4f6fa 4px);
}
.paid, .now {
    gap: 3px;
    width: 111px;
}
.now {
    width: 101px;
}
.finder {
    display: flex;
    width: 210px;
    height: 23px;
    margin-right: 14px;
    background: #fff;
    border: 1px solid #7da1d0;
}
.finder button {
    display: flex;
    align-items: center;
    gap: 4px;
    width: 31px;
    padding-left: 4px;
    background: #adc8e7;
}
.finder .go {
    width: 39px;
    gap: 5px;
}
.finder input {
    flex: 1;
    min-width: 0;
    padding-left: 3px;
    font-style: italic;
}
.finder input::placeholder {
    color: #808080;
}
.stamp {
    height: 25px;
    margin-left: auto;
    padding: 0 14px;
    border: 2px solid #c00000;
    color: #c00000;
    font-family: "Open Sans", sans-serif;
    font-size: 13px;
    line-height: 20px;
}

/* tabs and panels */
.tabs {
    display: flex;
}
.tabs button {
    height: 19px;
    padding: 0 13px;
    border: solid #7da1d0;
    border-width: 1px 1px 0 0;
    white-space: nowrap;
}
.tabs .on {
    padding: 0 12px;
    border-left-width: 1px;
    background: #ffe69a;
    font-weight: bold;
}
.upper .on {
    padding: 0 8px;
}
.panel {
    display: flex;
    gap: 10px;
    padding: 10px 8px 7px 9px;
    border: 1px solid #7da1d0;
}
fieldset {
    min-width: 0;
    margin: 0;
    padding: 8px 9px 7px 8px;
    border: 1px solid #7da1d0;
}
legend {
    padding: 0 3px;
    margin-left: -5px;
    font-weight: bold;
}
.general {
    flex: 1;
}
.voucher {
    width: 206px;
    padding-right: 6px;
}
.row {
    display: flex;
    align-items: center;
    height: 21px;
    margin-bottom: 3px;
}
.row label:first-child, .caption {
    width: 94px;
}
.voucher .row label:first-child {
    width: 86px;
}
.row .combo, .row .code {
    width: 192px;
    margin-right: 8px;
}
.voucher .row .combo {
    flex: 1;
    width: auto;
    margin: 0;
}
.row .grow {
    flex: 1;
    min-width: 0;
}
.row .mid {
    width: 72px;
    padding-left: 2px;
}
.refs {
    height: 23px;
    margin: 0;
}
.refs .caption {
    width: 96px;
}
.refs a {
    margin-right: 7px;
    color: #00f;
    text-decoration: underline;
}
.lookup {
    display: grid;
    place-items: center;
    width: 23px;
    height: 23px;
    margin-left: auto;
    background: #adc8e7;
    border: 1px solid #7da1d0;
}
.terms {
    display: flex;
    align-items: center;
    margin: 6px 0 6px 10px;
}
.terms > label {
    width: 82px;
}
.terms .term {
    width: 112px;
    margin-right: 14px;
}
.terms .gap {
    width: 93px;
}
.terms .due {
    width: 86px;
}
.spin {
    width: 64px;
}
.spin input {
    padding-right: 2px;
    text-align: right;
}
.arrows {
    display: grid;
    gap: 1px;
    width: 17px;
}
.arrows button {
    width: 17px;
}
.arrows .up {
    border-width: 0 2px 2px;
}
.unit {
    width: 51px;
    padding-left: 2px;
}
.due-date {
    width: 88px;
}
.collapse {
    display: grid;
    place-items: center;
    width: 50px;
    height: 8px;
    margin: 0 auto;
    background: #adc8e7;
    border: 1px solid #7da1d0;
}
.detail-head {
    display: flex;
    justify-content: space-between;
    align-items: flex-end;
    height: 25px;
}
.currency {
    display: flex;
    align-items: center;
    align-self: flex-start;
    margin-top: 1px;
}
.currency label {
    width: 54px;
}
.currency label + input {
    width: 80px;
    padding-right: 2px;
    text-align: right;
    background: #e5e5e5;
}
.currency .money + label {
    width: 46px;
}
.money {
    width: 59px;
    margin-right: 7px;
}
.items {
    border-left: 1px solid #7da1d0;
}
.items th:first-child, .items td:first-child {
    border-right: 1px solid #808080;
}
.items .hint {
    padding: 0 0 0 3px;
}
.items tbody td:last-child {
    border-right: 1px solid #7da1d0;
}
.items .half td {
    height: 8px;
    border-bottom: 0;
}
.items .count {
    padding-left: 4px;
}
.warn svg {
    display: inline-block;
    margin: 0 7px 0 -3px;
    vertical-align: -2px;
}
.grid .edit {
    padding: 0;
    border: 0;
}
.edit div {
    display: flex;
    justify-content: space-between;
    align-items: center;
    height: 20px;
    padding-left: 4px;
    border: 1px solid #b8b8b8;
}
.edit mark {
    background: #3399ff;
    color: #fff;
}
.edit button {
    display: grid;
    place-items: center;
    width: 17px;
    height: 18px;
    background: #ffe69a;
}
.bottom {
    display: flex;
    margin-top: 9px;
}
.actions {
    flex: none;
    display: grid;
    gap: 6px;
    width: 120px;
    margin-right: 124px;
}
.actions button {
    height: 23px;
    background: #adc8e7;
    border: 1px solid #7da1d0;
}
.bottom dl {
    flex: none;
    display: grid;
    grid-template-columns: 110px 100px;
    grid-auto-rows: 23px;
    align-content: start;
    align-items: center;
    margin-top: 3px;
}
.bottom .wide {
    grid-template-columns: 126px 110px;
    margin-left: 144px;
}
.bottom dt {
    font-weight: bold;
}
.bottom dd {
    text-align: right;
}

/* taskbar */
.taskbar {
    display: flex;
    align-items: center;
    height: 40px;
    color: #fff;
    font-family: Roboto, "Open Sans", sans-serif;
    font-size: 12px;
    background: linear-gradient(90deg, #060606 100px, transparent 140px, transparent calc(100% - 160px), #060606 calc(100% - 140px)), linear-gradient(#7d827e 0, #6c716d 35%, #141513 50%, #000 100%);
    border-top: 1px solid #222;
}
.start {
    width: 54px;
    padding-left: 8px;
}
.quick {
    width: 68px;
    padding-left: 19px;
}
.task {
    display: flex;
    align-items: center;
    gap: 4px;
    width: 159px;
    height: 38px;
    padding-left: 8px;
    white-space: nowrap;
    background: linear-gradient(100deg, #8e8e8e, transparent 50%), linear-gradient(#777 0, #555 45%, #1d1d1d 55%, #222 100%);
    border: 1px solid #999;
    border-radius: 3px;
}
.task.focus {
    padding-left: 9px;
    background: linear-gradient(100deg, #c8c8c8, transparent 60%), linear-gradient(#aaa 0, #888 45%, #555 55%, #777 100%);
    border-color: #ddd;
}
.task.paint {
    margin-left: 2px;
}
.folder {
    width: 66px;
    padding-left: 15px;
}
.tray {
    display: flex;
    align-items: center;
    gap: 8px;
    height: 100%;
    margin-left: auto;
}
.tray .tri {
    margin-right: 4px;
}
.unikey {
    width: 17px;
    height: 17px;
    background: #e3b5b5;
    border: 1px solid #eee;
    color: #c01818;
    font-size: 13px;
    font-weight: bold;
    line-height: 15px;
    text-align: center;
}
time {
    padding-left: 9px;
    line-height: 17px;
    text-align: center;
}
.peek {
    width: 14px;
    height: 38px;
    background: linear-gradient(135deg, #555, #111);
    border: 1px solid #888;
}
```
